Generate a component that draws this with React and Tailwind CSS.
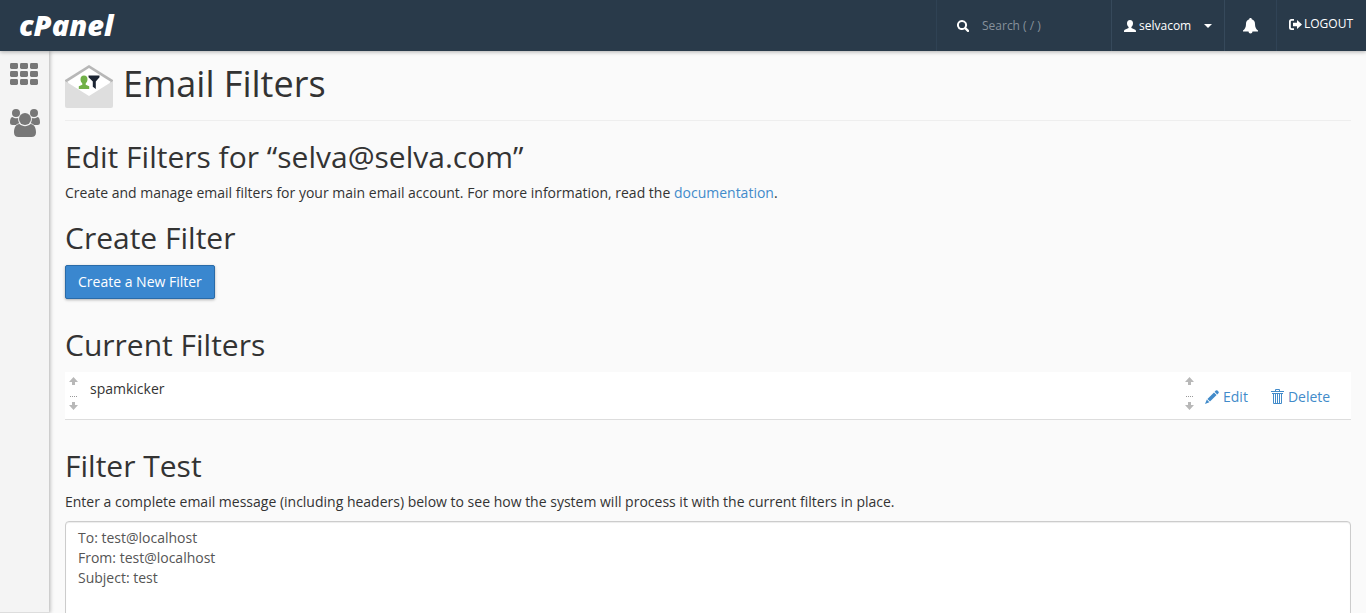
import { useState } from "react"

const FILTERS = [{ id: 1, name: "spamkicker" }]

const TEST_MESSAGE = `To: test@localhost
From: test@localhost
Subject: test

viagra


`

function Icon({ size = "size-4", box = "0 0 16 16", children }) {
  return (
    <svg viewBox={box} className={`${size} shrink-0`} fill="currentColor" aria-hidden="true">
      {children}
    </svg>
  )
}

function GridIcon() {
  return (
    <Icon size="w-7 h-6" box="0 0 28 24">
      {[1, 9, 17].map(y => [0, 10, 20].map(x => (
        <rect key={`${x}-${y}`} x={x} y={y} width="8" height="6" rx="1.4" />
      )))}
    </Icon>
  )
}

function GroupIcon() {
  return (
    <Icon size="w-[30px] h-7" box="0 0 30 28">
      <circle cx="6" cy="4" r="4" />
      <circle cx="24" cy="4" r="4" />
      <path d="M2.4 8C.7 8 0 10.500 0 13.500c0 1.700 1 2.500 2.500 2.500H6c1-1 2-1.500 3.400-1.700C8.500 13 8 11.500 8.200 9 5.500 9.600 4 9 2.400 8z" />
      <path d="M27.600 8c1.700 0 2.400 2.500 2.400 5.500 0 1.700-1 2.500-2.500 2.500H24c-1-1-2-1.500-3.400-1.700.9-1.300 1.400-2.800 1.200-5.300 2.700.6 4.200 0 5.800-1z" />
      <circle cx="15" cy="10" r="6" />
      <path d="M9.500 15C5.800 15 4 19 4 23.500 4 26.500 5.800 28 8.500 28h13c2.700 0 4.500-1.500 4.500-4.500 0-4.500-1.800-8.500-5.500-8.500-1.500 1.300-3.500 2.200-5.500 2.200S11 16.300 9.500 15z" />
    </Icon>
  )
}

function FilterEnvelope() {
  return (
    <svg viewBox="0 0 48 43" className="w-12 h-[43px] shrink-0" aria-hidden="true">
      <path d="M0 15 24 0l24 15v3H0z" fill="#b7b7b7" />
      <path d="M2 17 24 3l22 14-22 15z" fill="#fff" />
      <path d="M0 16l24 15 24-15v25a2 2 0 0 1-2 2H2a2 2 0 0 1-2-2z" fill="#dedede" />
      <path d="M19 10.500c-2.300 0-3.500 1.500-3.500 3.800 0 1.800.8 3.200 1.800 4.100v1.400l-3.500 1.500V24h10.400v-2.700l-3.500-1.500v-1.400c1-.9 1.800-2.300 1.800-4.100 0-2.300-1.200-3.800-3.500-3.800z" fill="#71b048" />
      <path d="M23.500 10.500h11v1.700l-3.700 4.300V24l-3-2.300v-5.200l-4.300-4.300z" fill="#1c2533" />
    </svg>
  )
}

function SortHandle() {
  return (
    <svg viewBox="0 0 9 33" className="w-[9px] h-[33px] shrink-0" aria-hidden="true">
      <path d="M4.500 0 9 5H6v3H3V5H0z" fill="#b8b8b8" />
      <path d="M1 19.500h8" stroke="#999" strokeDasharray="1 1" />
      <path d="M4.500 33 9 28H6v-3H3v3H0z" fill="#b8b8b8" />
    </svg>
  )
}

function Header() {
  return (
    <header className="relative z-20 flex h-[51px] shrink-0 items-stretch justify-between bg-[#293a4a] text-white shadow-[0_1px_4px_rgba(0,0,0,0.3)]">
      <a href="#home" className="pl-[19px] text-[29px] leading-[50px] font-extrabold italic">cPanel</a>
      <div className="flex text-xs">
        <div className="flex w-[175px] items-center border-l border-[#2f4254] pl-5">
          <Icon size="size-3" box="0 0 12 12">
            <path fillRule="evenodd" d="M5 0a5 5 0 1 0 2.700 9.200l2.500 2.500a1.100 1.100 0 0 0 1.600-1.600L9.300 7.600A5 5 0 0 0 5 0zm0 1.900a3.100 3.100 0 1 1 0 6.200 3.100 3.100 0 0 1 0-6.200z" />
          </Icon>
          <input type="text" aria-label="Search" placeholder="Search ( / )" className="ml-[13px] w-28 bg-transparent outline-none placeholder:text-[#87919b]" />
        </div>
        <button type="button" className="flex w-[113px] items-center border-l border-[#36495b] pl-3">
          <Icon size="size-3" box="0 0 12 12">
            <path d="M6 0C4 0 3 1.300 3 3.300c0 1.600.7 3 1.600 3.800v.9L.8 9.700C.2 10 0 10.500 0 12h12c0-1.500-.2-2-.8-2.300L7.400 8v-.9C8.300 6.300 9 4.900 9 3.300 9 1.300 8 0 6 0z" />
          </Icon>
          <span className="ml-[3px]">selvacom</span>
          <Icon size="w-2 h-1 ml-[13px]" box="0 0 8 4"><path d="M0 0h8L4 4z" /></Icon>
        </button>
        <button type="button" aria-label="Notifications" className="flex w-[52px] items-center justify-center border-l border-[#36495b]">
          <Icon size="w-[15px] h-4" box="0 0 15 16">
            <path d="M7.500 0c-.8 0-1.300.5-1.200 1.300C4 1.900 3 3.800 3 6c0 3.500-1.200 5.300-3 6.500V13.500h5.500a2 2 0 0 0 4 0H15v-1C13.200 11.300 12 9.500 12 6c0-2.200-1-4.100-3.300-4.700C8.800.5 8.300 0 7.500 0z" />
          </Icon>
        </button>
        <a href="#logout" className="flex items-center border-l border-[#304356] pr-[13px] pb-[3px] pl-3">
          <Icon size="w-[13px] h-[11px]" box="0 0 13 11">
            <path d="M5 0H2.500A2.500 2.500 0 0 0 0 2.500v6A2.500 2.500 0 0 0 2.500 11H5V9.200H2.700c-.6 0-.9-.3-.9-.9V2.700c0-.6.300-.9.900-.9H5z" />
            <path d="M8 1l5 4.500L8 10V7.300H4V3.700h4z" />
          </Icon>
          <span className="ml-[2px]">LOGOUT</span>
        </a>
      </div>
    </header>
  )
}

function Sidebar() {
  return (
    <nav className="z-10 flex w-[49px] shrink-0 flex-col gap-[23px] border-b border-[#ddd] bg-[#f4f4f4] pt-[11px] pl-[10px] text-[#777] shadow-[1px_0_4px_rgba(0,0,0,0.3)]">
      <a href="#home" aria-label="Home"><GridIcon /></a>
      <a href="#users" aria-label="Users"><GroupIcon /></a>
    </nav>
  )
}

function SectionTitle({ children }) {
  return <h2 className="text-[30px] leading-[33px] font-normal">{children}</h2>
}

function FilterRow({ filter }) {
  return (
    <tr className="h-[47px] border-b border-[#ddd] bg-white align-top">
      <td className="pt-[5px] pl-1">
        <div className="flex gap-3">
          <SortHandle />
          <span className="pt-[2px]">{filter.name}</span>
        </div>
      </td>
      <td className="w-[166px] pt-[5px]">
        <div className="flex items-center text-[#428bca]">
          <SortHandle />
          <a href="#edit" className="ml-[11px] flex items-center gap-1 pt-[6px]">
            <Icon size="size-[14px]" box="0 0 14 14">
              <path d="M10.800.6a1.200 1.200 0 0 1 1.700 0l.9.900a1.200 1.200 0 0 1 0 1.700l-1.200 1.200-2.600-2.600zM9 2.400 11.600 5 5 11.600 2.400 9zM1.800 9.600l2.600 2.600L0 14z" />
            </Icon>
            Edit
          </a>
          <a href="#delete" className="ml-[23px] flex items-center gap-1 pt-[6px]">
            <svg viewBox="0 0 13 15" className="w-[13px] h-[15px]" fill="none" stroke="currentColor" aria-hidden="true">
              <path d="M4.500 2.500v-2h4v2M0 2.500h13M1 4.500h11M2.500 4.500v10h8v-10M4.500 5v9M6.500 5v9M8.500 5v9" />
            </svg>
            Delete
          </a>
        </div>
      </td>
    </tr>
  )
}

export default function App() {
  const [message, setMessage] = useState(TEST_MESSAGE)

  return (
    <div className="flex h-screen flex-col overflow-hidden bg-[#fafafa] font-['Open_Sans',sans-serif] text-sm leading-5 text-[#333]">
      <Header />
      <div className="flex min-h-0 flex-1">
        <Sidebar />
        <main className="min-w-0 flex-1 overflow-y-auto pr-[15px] pl-4 [scrollbar-width:none]">
          <div className="flex items-center gap-[10px] border-b border-[#eee] pt-3 pb-[11px]">
            <FilterEnvelope />
            <h1 className="pb-1 text-[36px] leading-[42px] font-normal">Email Filters</h1>
          </div>

          <section className="pt-[19px]">
            <SectionTitle>Edit Filters for “selva@selva.com”</SectionTitle>
            <p className="mt-[10px]">
              Create and manage email filters for your main email account. For more information, read the{" "}
              <a href="#docs" className="text-[#428bca]">documentation</a>.
            </p>
          </section>

          <section className="pt-[18px]">
            <SectionTitle>Create Filter</SectionTitle>
            <button type="button" className="mt-[11px] block h-[34px] rounded-[2px] border border-[#2a6ba8] bg-[#3a87cf] px-3 text-white shadow-[0_1px_3px_rgba(0,0,0,0.3)]">
              Create a New Filter
            </button>
          </section>

          <section className="pt-[29px]">
            <SectionTitle>Current Filters</SectionTitle>
            <table className="mt-[11px] w-full border-collapse">
              <tbody>
                {FILTERS.map(f => <FilterRow key={f.id} filter={f} />)}
              </tbody>
            </table>
          </section>

          <section className="pt-[29px] pb-5">
            <SectionTitle>Filter Test</SectionTitle>
            <label htmlFor="message" className="mt-[10px] block">
              Enter a complete email message (including headers) below to see how the system will process it with the current filters in place.
            </label>
            <textarea id="message" rows={10} value={message} onChange={e => setMessage(e.target.value)}
              className="mt-[9px] block w-full resize-none rounded-[4px] border border-[#ccc] bg-white px-3 py-[6px] text-[#555] shadow-[inset_0_1px_1px_rgba(0,0,0,0.075)] outline-none" />
          </section>
        </main>
      </div>
    </div>
  )
}
